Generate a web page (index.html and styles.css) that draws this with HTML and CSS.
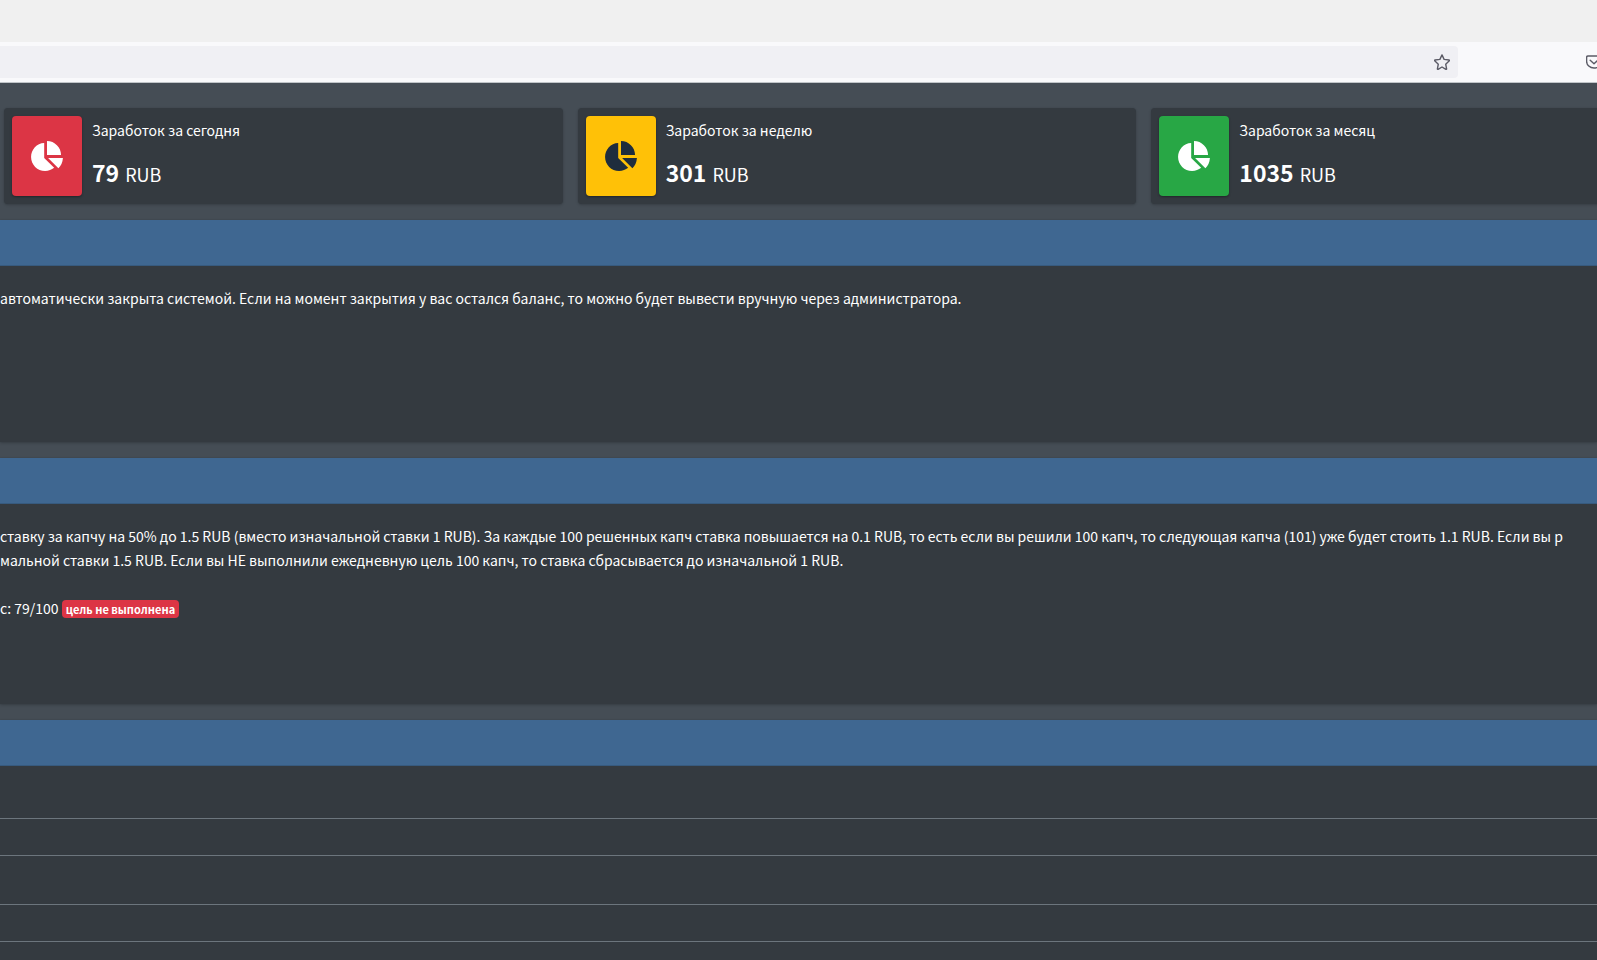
FILE: index.html
```html
<!DOCTYPE html>
<html lang="ru">
<head>
<meta charset="UTF-8">
<meta name="viewport" content="width=device-width, initial-scale=1.0">
<title>Заработок</title>
<link rel="stylesheet" href="styles.css">
</head>
<body>

<svg class="sprite" aria-hidden="true">
    <symbol id="chart-pie" viewBox="0 0 544 512">
        <path d="M544 288H290.5l176 176c44-40 71-98 77.500-176zM512 240C512 108 404 0 272 0V240zM224 288V32C96 36 0 144 0 272c0 133 107 240 240 240 59 0 112-21 154-54L224 288z"/>
    </symbol>
</svg>

<div class="tabs"></div>
<div class="toolbar">
    <div class="urlbar">
        <input type="text" class="url" aria-label="Адрес">
        <button class="tool" aria-label="Добавить в закладки">
            <svg width="16" height="16" viewBox="0 0 16 16"><path d="M8 .9l2.1 4.5 4.9.6c.4.1.6.5.3.8l-3.6 3.4.9 4.6c.1.4-.3.7-.7.5L8 13l-3.9 2.3c-.4.2-.8-.1-.7-.5l.9-4.6L.7 6.8c-.3-.3-.1-.7.3-.8l4.9-.6z"/></svg>
        </button>
    </div>
    <button class="tool pocket" aria-label="Сохранить">
        <svg width="16" height="16" viewBox="0 0 16 16"><path d="M2 2h12c.8 0 1.4.6 1.4 1.4v3.8a7.4 6.8 0 0 1-14.8 0V3.4C.6 2.600 1.200 2 2 2zM4.200 6.300L8 9.800l3.800-3.500"/></svg>
    </button>
</div>

<main class="content">
    <div class="stats">
        <div class="info-box">
            <span class="info-icon danger"><svg width="32" height="30"><use href="#chart-pie"/></svg></span>
            <div class="info-content">
                <span class="info-text">Заработок за сегодня</span>
                <span class="info-number"><b>79</b> RUB</span>
            </div>
        </div>
        <div class="info-box">
            <span class="info-icon warning"><svg width="32" height="30"><use href="#chart-pie"/></svg></span>
            <div class="info-content">
                <span class="info-text">Заработок за неделю</span>
                <span class="info-number"><b>301</b> RUB</span>
            </div>
        </div>
        <div class="info-box">
            <span class="info-icon success"><svg width="32" height="30"><use href="#chart-pie"/></svg></span>
            <div class="info-content">
                <span class="info-text">Заработок за месяц</span>
                <span class="info-number"><b>1035</b> RUB</span>
            </div>
        </div>
    </div>

    <section class="card">
        <div class="card-header"></div>
        <div class="card-body notice">
            автоматически закрыта системой. Если на момент закрытия у вас остался баланс, то можно будет вывести вручную через администратора.
        </div>
    </section>

    <section class="card">
        <div class="card-header"></div>
        <div class="card-body rate">
            ставку за капчу на 50% до 1.5 RUB (вместо изначальной ставки 1 RUB). За каждые 100 решенных капч ставка повышается на 0.1 RUB, то есть если вы решили 100 капч, то следующая капча (101) уже будет стоить 1.1 RUB. Если вы р<br>
            мальной ставки 1.5 RUB. Если вы НЕ выполнили ежедневную цель 100 капч, то ставка сбрасывается до изначальной 1 RUB.<br>
            <br>
            с: 79/100 <span class="badge">цель не выполнена</span>
        </div>
    </section>

    <section class="card">
        <div class="card-header"></div>
        <div class="card-body history">
            <table>
                <tr><td></td></tr>
                <tr class="tall"><td></td></tr>
                <tr><td></td></tr>
                <tr class="tall"><td></td></tr>
            </table>
        </div>
    </section>
</main>

</body>
</html>
```
FILE: styles.css
```css
* {
    box-sizing: border-box;
}
html, body {
    height: 100%;
    margin: 0;
    overflow: hidden;
}
body {
    display: flex;
    flex-direction: column;
    font-family: "Source Sans Pro", "Noto Sans CJK SC", sans-serif;
    font-size: 14px;
    line-height: 24px;
    color: #fff;
    background-color: #454d55;
}
.sprite {
    display: none;
}

/* browser bar */
.tabs {
    flex: none;
    height: 42px;
    background: #f0f0f0;
}
.toolbar {
    flex: none;
    display: flex;
    align-items: center;
    padding: 4px 0;
    background: #f9f9fb;
    border-bottom: 1px solid #c0c5c9;
}
.urlbar {
    flex: 1;
    display: flex;
    align-items: center;
    height: 32px;
    margin-right: 128px;
    padding-right: 8px;
    background: #f0f0f4;
    border-radius: 0 4px 4px 0;
}
.url {
    flex: 1;
    border: 0;
    background: none;
    outline: none;
}
.tool {
    display: flex;
    padding: 0;
    border: 0;
    background: none;
    cursor: pointer;
}
.tool path {
    fill: none;
    stroke: #5b5b66;
    stroke-width: 1.4;
    stroke-linejoin: round;
    stroke-linecap: round;
}
.pocket {
    margin-right: -5px;
}

/* page */
.content {
    flex: 1;
    overflow: hidden;
    padding-top: 25px;
}
.stats {
    display: grid;
    grid-template-columns: repeat(3, 1fr);
    gap: 15px;
    margin: 0 -113px 16px 4px;
}
.info-box {
    display: flex;
    min-height: 96px;
    padding: 8px;
    background: #343a40;
    border-radius: 4px;
    box-shadow: 0 0 1px rgba(0, 0, 0, 0.125), 0 1px 3px rgba(0, 0, 0, 0.2);
}
.info-icon {
    display: flex;
    align-items: center;
    justify-content: center;
    width: 70px;
    border-radius: 4px;
    fill: #fff;
    box-shadow: 0 1px 3px rgba(0, 0, 0, 0.12), 0 1px 2px rgba(0, 0, 0, 0.24);
}
.danger {
    background: #dc3545;
}
.warning {
    background: #ffc107;
    fill: #1f2d3d;
}
.success {
    background: #28a745;
}
.info-content {
    display: flex;
    flex-direction: column;
    justify-content: space-between;
    padding: 2px 10px 6px;
}
.info-number {
    font-size: 18px;
    line-height: 32px;
}
.info-number b {
    margin-right: 2px;
    font-size: 23px;
}
.card {
    margin-bottom: 16px;
    background: #343a40;
    box-shadow: 0 0 1px rgba(0, 0, 0, 0.125), 0 1px 3px rgba(0, 0, 0, 0.2);
}
.card-header {
    height: 46px;
    background: #3f6791;
    border-bottom: 1px solid rgba(0, 0, 0, 0.125);
}
.card-body {
    padding: 20px 0;
    white-space: nowrap;
    overflow: hidden;
}
.notice {
    padding-bottom: 132px;
}
.rate {
    padding-bottom: 84px;
}
.badge {
    display: inline-block;
    padding: 3px 4px;
    font-size: 11px;
    font-weight: 700;
    line-height: 12px;
    background: #dc3545;
    border-radius: 4px;
}
.history {
    padding-top: 52px;
}
.history table {
    width: 100%;
    border-collapse: collapse;
}
.history td {
    height: 37px;
    padding: 0;
    border-top: 1px solid #6c757d;
}
.history .tall td {
    height: 49px;
}
```
